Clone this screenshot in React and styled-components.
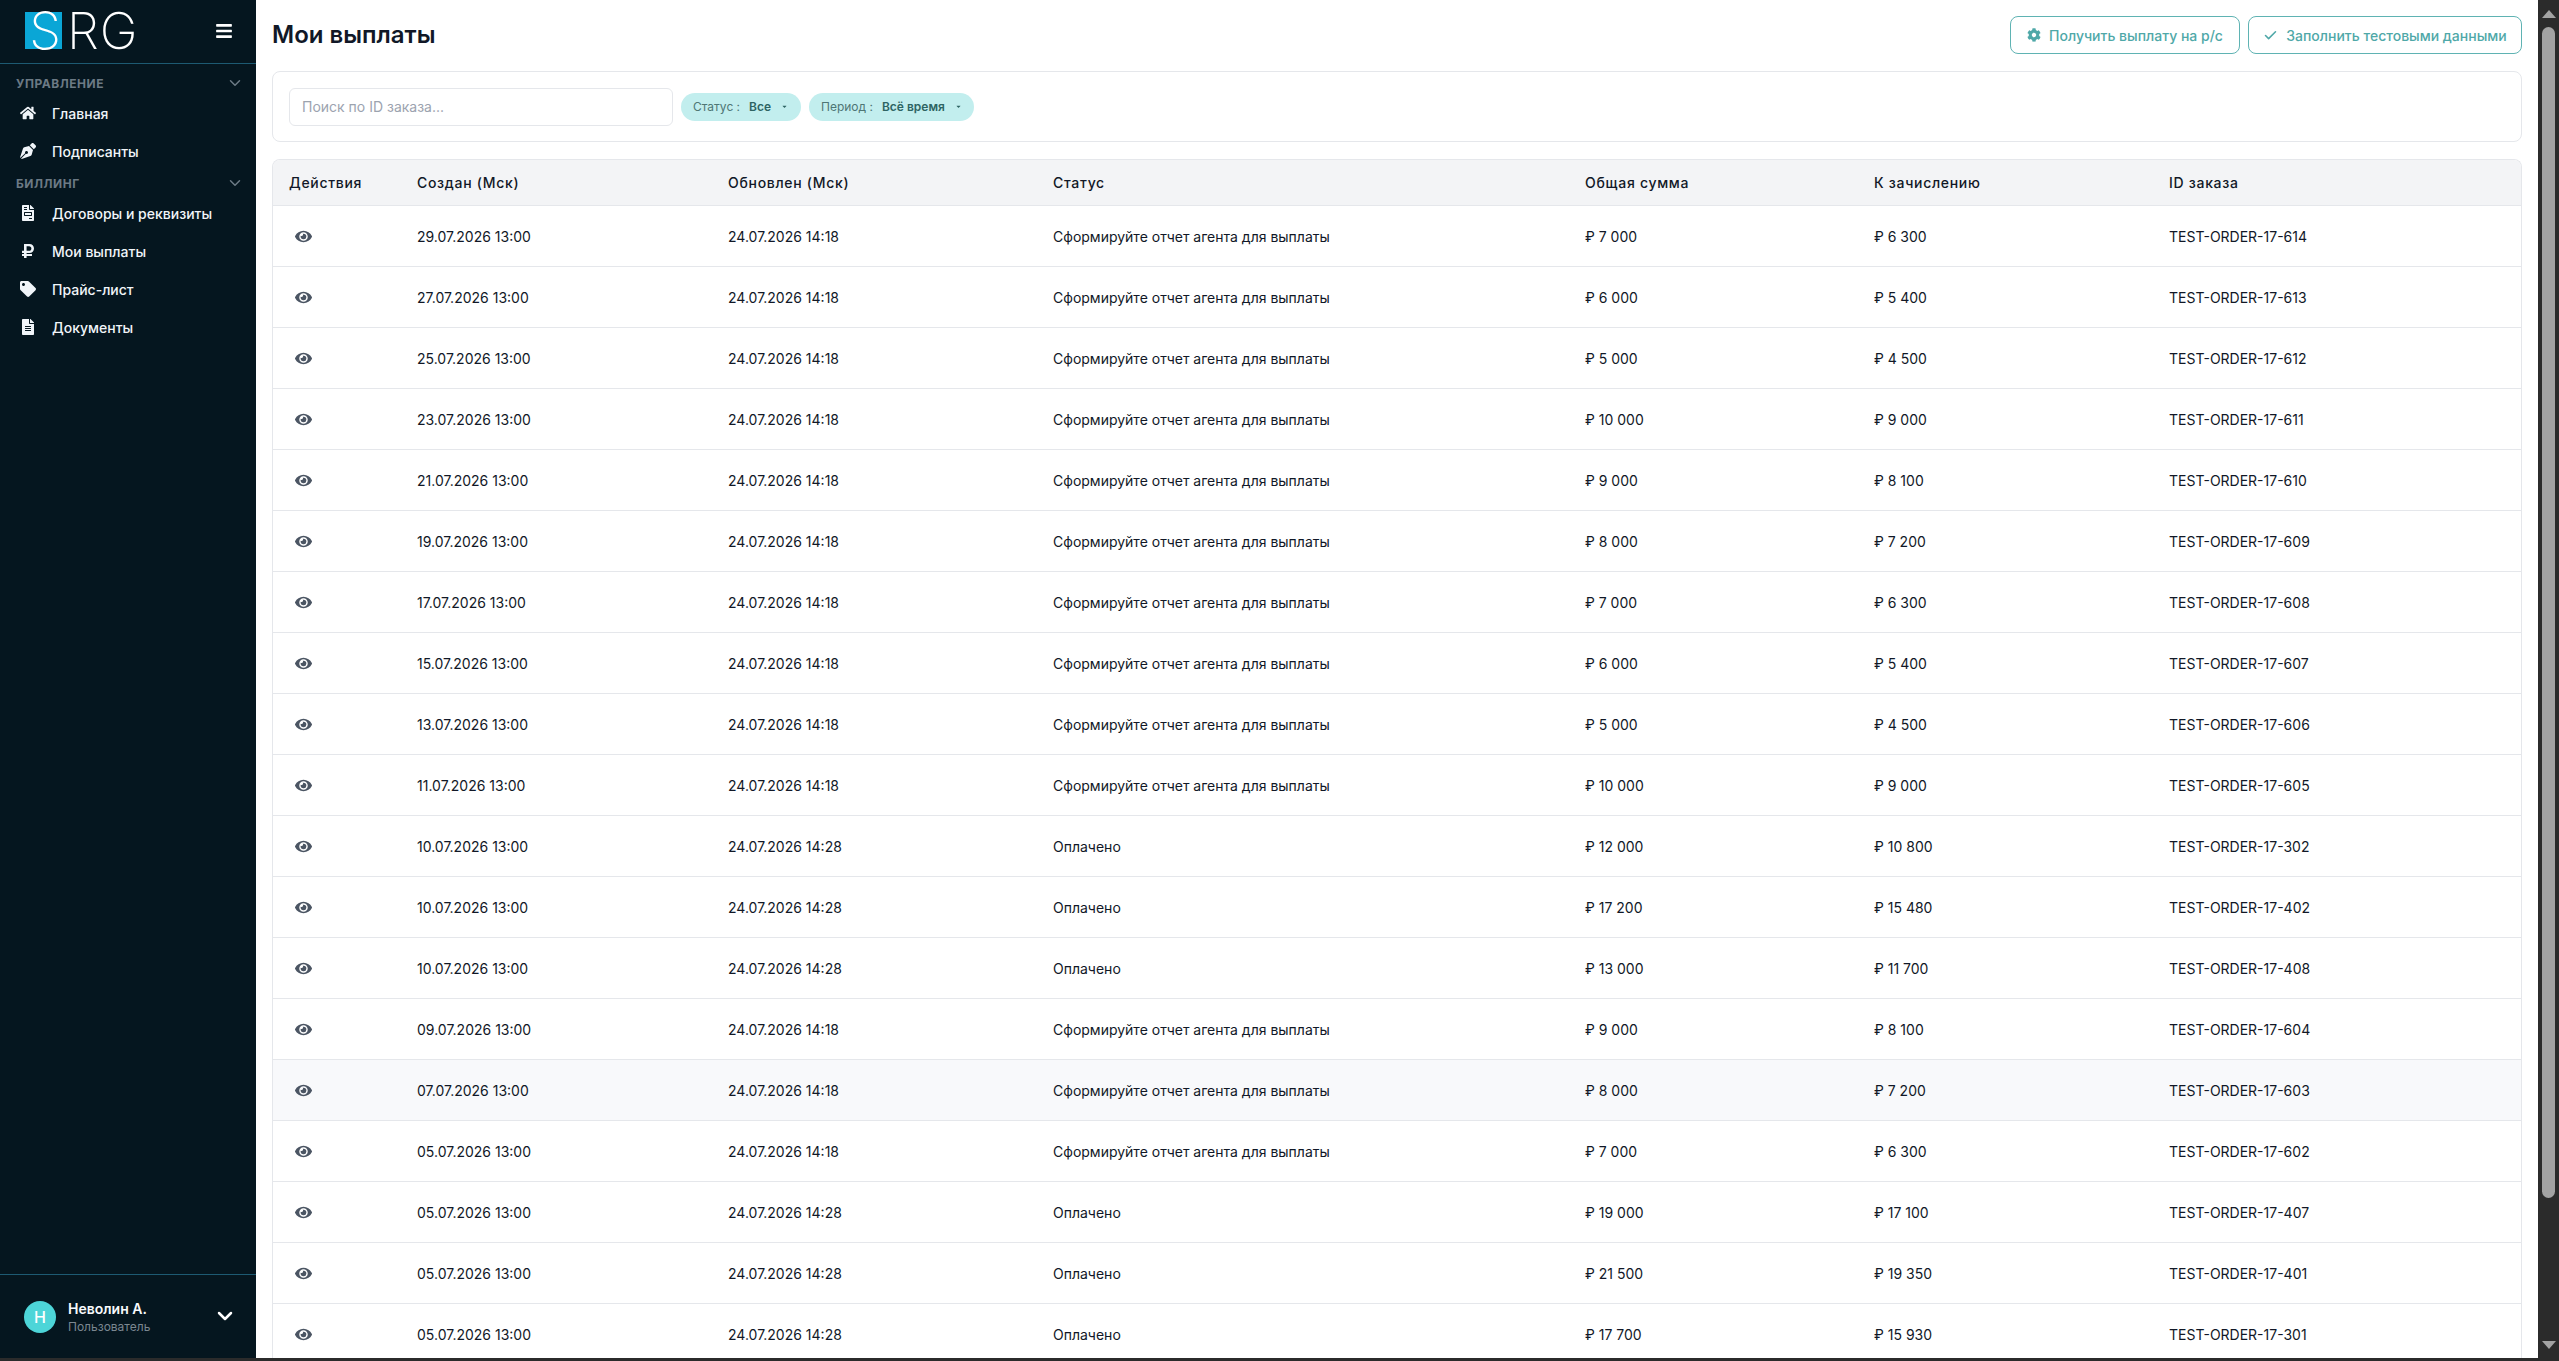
import React from 'react';
import styled, { createGlobalStyle } from 'styled-components';
import { FaHome, FaPenNib, FaFileAlt, FaFileInvoice, FaRubleSign, FaTag, FaEye, FaCog, FaBars, FaCaretDown } from 'react-icons/fa';
import { ChevronDown, Check } from 'lucide-react';

const Global = createGlobalStyle`
  html, body { margin: 0; padding: 0; height: 100%; overflow: hidden; background: #fff; }
  * { box-sizing: border-box; }
  body { font-family: Inter, "Noto Sans", sans-serif; color: #111827; }
`;

const Page = styled.div`
  height: 1361px; display: flex; flex-direction: column; background: #2b2b2b; overflow: hidden;
`;
const Frame = styled.div`
  height: 1358px; display: flex; overflow: hidden; flex: none;
`;
const Sidebar = styled.aside`
  width: 256px; flex: none; background: #05161f; color: #fff; display: flex; flex-direction: column;
`;
const Brand = styled.div`
  height: 64px; flex: none; padding: 12px 23px 0 25px; display: flex; justify-content: space-between;
  border-bottom: 1px solid #1d5a72;
`;
const Logo = styled.div`
  display: flex; height: 37px; font-family: Inter, sans-serif; font-weight: 200; font-size: 51px; line-height: 37px;
  letter-spacing: 1px; color: #fff;
`;
const LogoMark = styled.span`
  width: 37px; height: 37px; background: #0aa6d6; display: flex; justify-content: flex-end; margin-right: 5px;
`;
const Burger = styled.div`
  display: flex; padding-top: 10px; font-size: 18px; color: #fff;
`;
const Nav = styled.nav`
  flex: 1; display: flex; flex-direction: column; padding-top: 10px;
`;
const Section = styled.div`
  height: 18px; padding: 0 12px 0 16px; display: flex; align-items: center; justify-content: space-between;
  font-size: 12px; font-weight: 700; letter-spacing: 0.55px; color: #6c7a85; text-transform: uppercase;
  margin-top: ${p => p.$gap}px; margin-bottom: 2px;
`;
const Item = styled.div`
  height: 38px; display: flex; align-items: center; padding-left: 20px; gap: 16px;
  font-size: 14px; font-weight: 500; color: #f1f5f9;
  svg { flex: none; width: 16px; height: 16px; }
`;
const UserBox = styled.div`
  height: 84px; flex: none; border-top: 1px solid #1d5a72; padding: 26px 24px 0; display: flex; align-items: flex-start; gap: 12px;
`;
const Avatar = styled.div`
  width: 32px; height: 32px; border-radius: 50%; background: #4dd5d8; color: #fff; display: flex; align-items: center; justify-content: center;
  font-size: 16px; font-weight: 500; flex: none;
`;
const UserText = styled.div`
  flex: 1; display: flex; flex-direction: column; margin-top: -2px;
`;
const UserName = styled.div`
  font-size: 14px; font-weight: 600; line-height: 20px; color: #f8fafc;
`;
const UserRole = styled.div`
  font-size: 12px; line-height: 16px; color: #7b8791;
`;
const UserChevron = styled.div`
  display: flex; padding-top: 3px; margin-right: -5px; color: #fff;
`;
const Main = styled.main`
  flex: 1; min-width: 0; background: #fff; padding: 0 16px; overflow: hidden;
`;
const TopBar = styled.header`
  height: 71px; display: flex; justify-content: space-between; align-items: flex-start; padding-top: 16px;
`;
const Title = styled.h1`
  margin: 1px 0 0; font-size: 24px; line-height: 36px; font-weight: 600; color: #111827;
`;
const Actions = styled.div`
  display: flex; gap: 8px;
`;
const OutlineButton = styled.button`
  height: 38px; width: ${p => p.$w}px; display: flex; align-items: center; justify-content: center; gap: 8px;
  background: #fff; border: 1px solid #5fb3b3; border-radius: 8px; color: #4fa8a8;
  font: 500 14px Inter, sans-serif; padding: 0;
`;
const FilterCard = styled.section`
  height: 71px; display: flex; align-items: center; gap: 8px; padding: 0 16px;
  border: 1px solid #e5e7eb; border-radius: 8px; background: #fff;
`;
const SearchBox = styled.input`
  width: 384px; height: 38px; border: 1px solid #e5e7eb; border-radius: 6px; padding: 0 12px;
  font: 400 14px Inter, sans-serif; color: #111827; outline: none;
  &::placeholder { color: #9ca3af; opacity: 1; }
`;
const Pill = styled.div`
  height: 28px; width: ${p => p.$w}px; border-radius: 14px; background: #c2eeee; display: flex; align-items: center; padding-left: 12px;
  font-size: 12px; color: #4f7675; white-space: pre;
  b { font-weight: 600; color: #2e6463; margin-left: 9px; }
  svg { font-size: 7px; margin-left: 10px; color: #2e6463; }
`;
const TableCard = styled.div`
  margin-top: 17px; border: 1px solid #e5e7eb; border-bottom: 0; border-radius: 8px 8px 0 0; overflow: hidden;
`;
const Table = styled.table`
  width: 100%; border-collapse: collapse; table-layout: fixed;
`;
const Col = styled.col`
  width: ${p => p.$w ? `${p.$w}px` : 'auto'};
`;
const Th = styled.th`
  height: 45px; padding: 0 0 0 16px; background: #f3f4f6; text-align: left; font-size: 14px; font-weight: 500; color: #111827;
  letter-spacing: 0.7px; border-bottom: 1px solid #e5e7eb;
`;
const Row = styled.tr`
  background: ${p => p.$hover ? '#f8f9fb' : '#fff'};
`;
const Td = styled.td`
  height: 61px; padding: 1px 0 0 16px; font-size: 14px; font-weight: 400; color: #111827; border-bottom: 1px solid #e5e7eb; white-space: nowrap;
`;
const EyeWrap = styled.span`
  display: flex; padding-left: 6px; color: #4b5563; font-size: 17px;
`;
const ScrollTrack = styled.div`
  width: 21px; flex: none; background: #2b2b2b; display: flex; flex-direction: column; align-items: center;
`;
const Arrow = styled.div`
  height: 27px; flex: none; display: flex; align-items: center; justify-content: center;
  &::before { content: ""; border-left: 7px solid transparent; border-right: 7px solid transparent;
    ${p => p.$up ? 'border-bottom: 8px solid #a3a3a3;' : 'border-top: 8px solid #a3a3a3;'} }
`;
const Thumb = styled.div`
  width: 13px; height: 1171px; flex: none; background: #a3a3a3; border-radius: 7px;
`;
const Gap = styled.div`
  flex: 1;
`;

const rows = [
  ['29.07.2026 13:00','24.07.2026 14:18',0,'₽ 7 000','₽ 6 300','TEST-ORDER-17-614'],
  ['27.07.2026 13:00','24.07.2026 14:18',0,'₽ 6 000','₽ 5 400','TEST-ORDER-17-613'],
  ['25.07.2026 13:00','24.07.2026 14:18',0,'₽ 5 000','₽ 4 500','TEST-ORDER-17-612'],
  ['23.07.2026 13:00','24.07.2026 14:18',0,'₽ 10 000','₽ 9 000','TEST-ORDER-17-611'],
  ['21.07.2026 13:00','24.07.2026 14:18',0,'₽ 9 000','₽ 8 100','TEST-ORDER-17-610'],
  ['19.07.2026 13:00','24.07.2026 14:18',0,'₽ 8 000','₽ 7 200','TEST-ORDER-17-609'],
  ['17.07.2026 13:00','24.07.2026 14:18',0,'₽ 7 000','₽ 6 300','TEST-ORDER-17-608'],
  ['15.07.2026 13:00','24.07.2026 14:18',0,'₽ 6 000','₽ 5 400','TEST-ORDER-17-607'],
  ['13.07.2026 13:00','24.07.2026 14:18',0,'₽ 5 000','₽ 4 500','TEST-ORDER-17-606'],
  ['11.07.2026 13:00','24.07.2026 14:18',0,'₽ 10 000','₽ 9 000','TEST-ORDER-17-605'],
  ['10.07.2026 13:00','24.07.2026 14:28',1,'₽ 12 000','₽ 10 800','TEST-ORDER-17-302'],
  ['10.07.2026 13:00','24.07.2026 14:28',1,'₽ 17 200','₽ 15 480','TEST-ORDER-17-402'],
  ['10.07.2026 13:00','24.07.2026 14:28',1,'₽ 13 000','₽ 11 700','TEST-ORDER-17-408'],
  ['09.07.2026 13:00','24.07.2026 14:18',0,'₽ 9 000','₽ 8 100','TEST-ORDER-17-604'],
  ['07.07.2026 13:00','24.07.2026 14:18',0,'₽ 8 000','₽ 7 200','TEST-ORDER-17-603'],
  ['05.07.2026 13:00','24.07.2026 14:18',0,'₽ 7 000','₽ 6 300','TEST-ORDER-17-602'],
  ['05.07.2026 13:00','24.07.2026 14:28',1,'₽ 19 000','₽ 17 100','TEST-ORDER-17-407'],
  ['05.07.2026 13:00','24.07.2026 14:28',1,'₽ 21 500','₽ 19 350','TEST-ORDER-17-401'],
  ['05.07.2026 13:00','24.07.2026 14:28',1,'₽ 17 700','₽ 15 930','TEST-ORDER-17-301'],
];
const statuses = ['Сформируйте отчет агента для выплаты', 'Оплачено'];
const heads = [['Действия',128],['Создан (Мск)',311],['Обновлен (Мск)',325],['Статус',532],['Общая сумма',289],['К зачислению',295],['ID заказа',0]];

export default function App() {
  return (
    <Page>
      <Global />
      <Frame>
        <Sidebar>
          <Brand>
            <Logo><LogoMark>S</LogoMark>RG</Logo>
            <Burger><FaBars /></Burger>
          </Brand>
          <Nav>
            <Section $gap={0}>Управление<ChevronDown size={18} /></Section>
            <Item><FaHome />Главная</Item>
            <Item><FaPenNib />Подписанты</Item>
            <Section $gap={4}>Биллинг<ChevronDown size={18} /></Section>
            <Item><FaFileInvoice />Договоры и реквизиты</Item>
            <Item><FaRubleSign />Мои выплаты</Item>
            <Item><FaTag />Прайс-лист</Item>
            <Item><FaFileAlt />Документы</Item>
          </Nav>
          <UserBox>
            <Avatar>Н</Avatar>
            <UserText>
              <UserName>Неволин А.</UserName>
              <UserRole>Пользователь</UserRole>
            </UserText>
            <UserChevron><ChevronDown size={24} strokeWidth={2.5} /></UserChevron>
          </UserBox>
        </Sidebar>
        <Main>
          <TopBar>
            <Title>Мои выплаты</Title>
            <Actions>
              <OutlineButton $w={230}><FaCog size={14} />Получить выплату на р/с</OutlineButton>
              <OutlineButton $w={274}><Check size={15} strokeWidth={2.5} />Заполнить тестовыми данными</OutlineButton>
            </Actions>
          </TopBar>
          <FilterCard>
            <SearchBox placeholder="Поиск по ID заказа..." />
            <Pill $w={120}>Статус :<b>Все</b><FaCaretDown /></Pill>
            <Pill $w={165}>Период :<b>Всё время</b><FaCaretDown /></Pill>
          </FilterCard>
          <TableCard>
            <Table>
              <colgroup>{heads.map(([h, w]) => <Col key={h} $w={w} />)}</colgroup>
              <thead><tr>{heads.map(([h]) => <Th key={h}>{h}</Th>)}</tr></thead>
              <tbody>
                {rows.map((r, i) => (
                  <Row key={r[5]} $hover={i === 14}>
                    <Td><EyeWrap><FaEye /></EyeWrap></Td>
                    <Td>{r[0]}</Td>
                    <Td>{r[1]}</Td>
                    <Td>{statuses[r[2]]}</Td>
                    <Td>{r[3]}</Td>
                    <Td>{r[4]}</Td>
                    <Td>{r[5]}</Td>
                  </Row>
                ))}
              </tbody>
            </Table>
          </TableCard>
        </Main>
        <ScrollTrack>
          <Arrow $up />
          <Thumb />
          <Gap />
          <Arrow />
        </ScrollTrack>
      </Frame>
    </Page>
  );
}
